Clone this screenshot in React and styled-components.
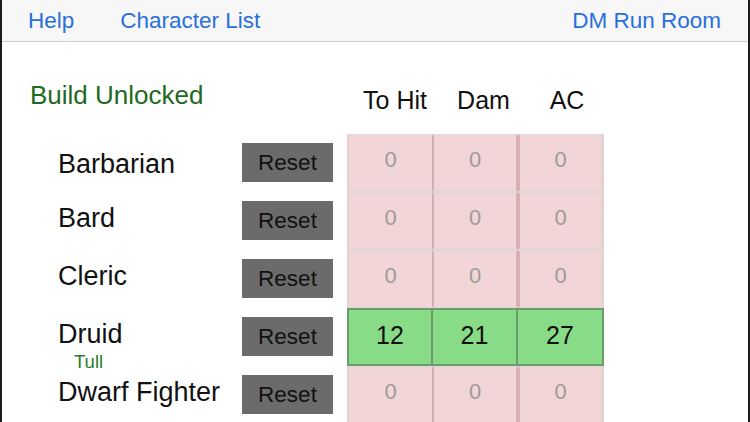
import React from 'react';
import styled, { createGlobalStyle } from 'styled-components';

const GlobalStyle = createGlobalStyle`
  body {
    margin: 0;
    background: #fff;
    font-family: "Liberation Sans", Arial, sans-serif;
  }
`;

const Page = styled('div')`
  width: 750px;
  height: 422px;
  box-sizing: border-box;
  border-left: 2px solid #1c1c1c;
  border-right: 2px solid #1c1c1c;
  overflow: hidden;
  background: #fff;
`;

const NavBar = styled('nav')`
  display: flex;
  align-items: flex-start;
  height: 42px;
  box-sizing: border-box;
  padding: 8px 27px 0 26px;
  background: #f7f7f7;
  border-bottom: 1px solid #cfcfcf;
`;

const NavLink = styled('span')`
  font-size: 22.5px;
  line-height: 26px;
  color: #2a6fdc;
  margin-right: ${props => props.gap || 0}px;
  margin-left: ${props => (props.right ? 'auto' : '0')};
`;

const HeaderRow = styled('div')`
  display: grid;
  grid-template-columns: 345px 86px 85px 86px;
  height: 92px;
`;

const Title = styled('div')`
  padding: 38px 0 0 28px;
  font-size: 26px;
  line-height: 30px;
  color: #1e6a1e;
`;

const HeadCell = styled('div')`
  padding: 43px 0 0 ${props => props.shift}px;
  text-align: center;
  font-size: 25px;
  line-height: 30px;
  color: #111;
`;

const Row = styled('div')`
  display: grid;
  grid-template-columns: 240px 105px 86px 85px 86px;
  height: 58px;
`;

const NameBlock = styled('div')`
  padding: ${props => 11 + props.nudge}px 0 0 56px;
`;

const ClassName = styled('div')`
  font-size: 27px;
  line-height: 30px;
  color: #111;
  white-space: nowrap;
`;

const Player = styled('div')`
  margin: 3px 0 0 16px;
  font-size: 18.5px;
  line-height: 20px;
  color: #24802a;
`;

const ResetButton = styled('button')`
  width: 91px;
  height: 39px;
  margin-top: 9px;
  padding: 1px 0 0;
  border: none;
  border-radius: 0;
  background: #6b6b6b;
  color: #111;
  font-family: "Liberation Sans", Arial, sans-serif;
  font-size: 22.5px;
  line-height: 38px;
`;

const pinkEdges = [
  { left: '2px solid #e4d2d3', right: '1px solid #cdb0b2' },
  { left: '1px solid #cdb0b2', right: '2px solid #d6b0b2' },
  { left: '2px solid #d6b0b2', right: '3px solid #e4d0d1' },
];

const Cell = styled('div')`
  box-sizing: border-box;
  display: flex;
  align-items: center;
  justify-content: center;
  height: 58px;
  padding-bottom: ${props => (props.active ? 4 : 6)}px;
  background: ${props => (props.active ? '#89dc87' : '#f2d6d7')};
  border-top: 2px solid ${props => (props.active ? '#6c9c6c' : '#e6d6d7')};
  border-bottom: 2px solid ${props => (props.active ? '#6c9c6c' : '#e6d6d7')};
  border-left: ${props => (props.active
    ? (props.col === 0 ? '2px solid #6c9c6c' : 'none')
    : pinkEdges[props.col].left)};
  border-right: ${props => (props.active ? '2px solid #6c9c6c' : pinkEdges[props.col].right)};
  font-size: ${props => (props.active ? 25 : 22)}px;
  color: ${props => (props.active ? '#111' : '#a09a9a')};
`;

const classes = [
  { name: 'Barbarian', nudge: 4 },
  { name: 'Bard' },
  { name: 'Cleric' },
  { name: 'Druid', player: 'Tull', stats: [12, 21, 27] },
  { name: 'Dwarf Fighter' },
];

const App = () => (
  <>
    <GlobalStyle />
    <Page>
      <NavBar>
        <NavLink gap={46}>Help</NavLink>
        <NavLink>Character List</NavLink>
        <NavLink right>DM Run Room</NavLink>
      </NavBar>
      <HeaderRow>
        <Title>Build Unlocked</Title>
        <HeadCell shift={10}>To Hit</HeadCell>
        <HeadCell shift={16}>Dam</HeadCell>
        <HeadCell shift={12}>AC</HeadCell>
      </HeaderRow>
      {classes.map(c => {
        const stats = c.stats || [0, 0, 0];
        return (
          <Row key={c.name}>
            <NameBlock nudge={c.nudge || 0}>
              <ClassName>{c.name}</ClassName>
              {c.player && <Player>{c.player}</Player>}
            </NameBlock>
            <div>
              <ResetButton>Reset</ResetButton>
            </div>
            {stats.map((v, i) => (
              <Cell key={i} col={i} active={!!c.stats}>{v}</Cell>
            ))}
          </Row>
        );
      })}
    </Page>
  </>
);

export default App;
